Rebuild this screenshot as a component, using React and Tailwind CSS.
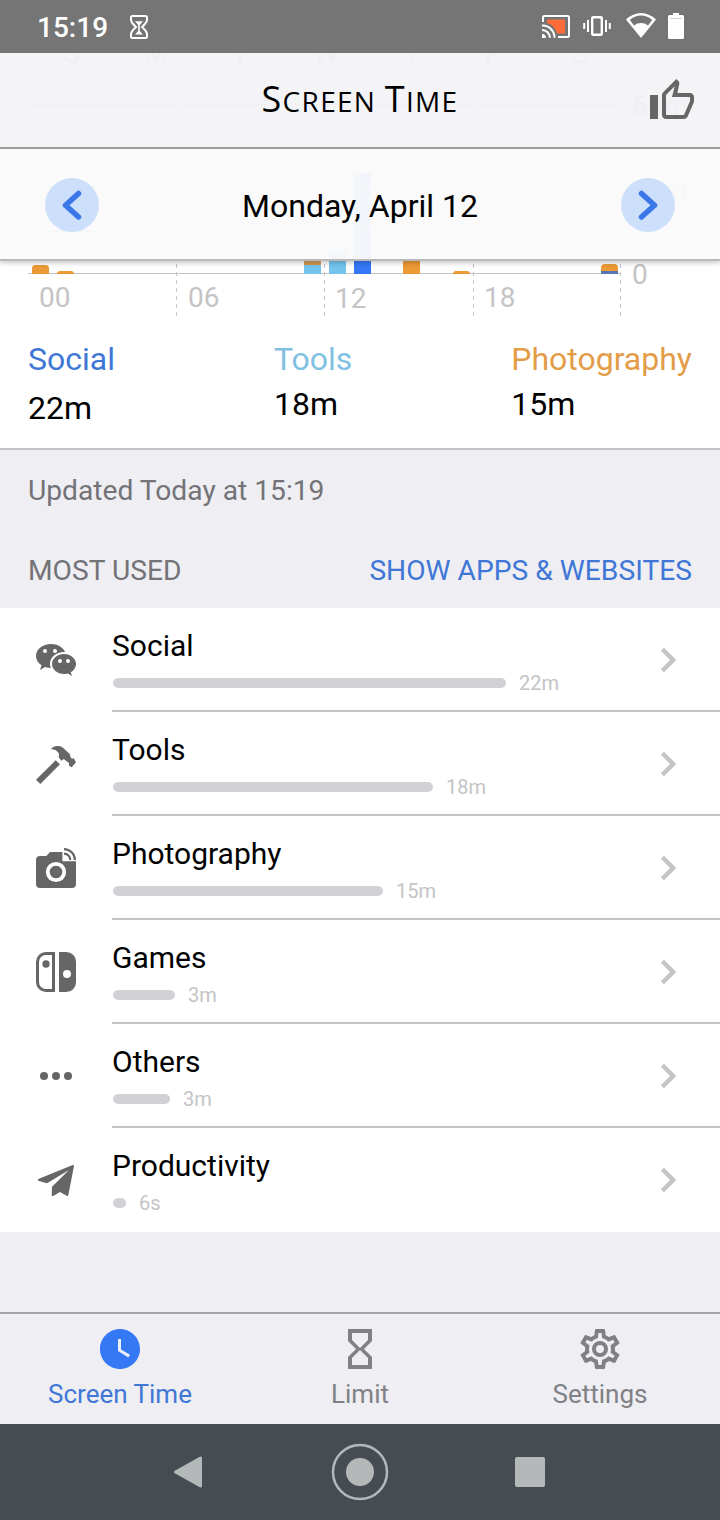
import React from 'react';

const rows = [
  { name: 'Social', time: '22m', width: 393, Icon: ChatIcon },
  { name: 'Tools', time: '18m', width: 320, Icon: HammerIcon },
  { name: 'Photography', time: '15m', width: 270, Icon: CameraIcon },
  { name: 'Games', time: '3m', width: 62, Icon: GamesIcon },
  { name: 'Others', time: '3m', width: 57, Icon: DotsIcon },
  { name: 'Productivity', time: '6s', width: 13, Icon: PlaneIcon },
];

const weekdays = [
  { x: 71, d: 'S' },
  { x: 156, d: 'M' },
  { x: 240, d: 'T' },
  { x: 326, d: 'W' },
  { x: 411, d: 'T' },
  { x: 492, d: 'F' },
  { x: 580, d: 'S' },
];

const gridLines = [176.5, 324.5, 473.5, 620.5];

function ChatIcon() {
  return (
    <svg viewBox="0 0 24 24" className="w-12 h-12" fill="currentColor">
      <path d="M9.5,4C5.36,4 2,6.69 2,10C2,11.89 3.08,13.56 4.78,14.66L4,17L6.5,15.5C7.39,15.81 8.37,16 9.41,16C9.15,15.37 9,14.7 9,14C9,10.69 12.13,8 16,8C16.19,8 16.38,8 16.56,8.03C15.54,5.69 12.78,4 9.5,4M6.5,6.5A1,1 0 0,1 7.5,7.5A1,1 0 0,1 6.5,8.5A1,1 0 0,1 5.5,7.5A1,1 0 0,1 6.5,6.5M11.5,6.5A1,1 0 0,1 12.5,7.5A1,1 0 0,1 11.5,8.5A1,1 0 0,1 10.5,7.5A1,1 0 0,1 11.5,6.5M16,9C12.69,9 10,11.24 10,14C10,16.76 12.69,19 16,19C16.67,19 17.31,18.92 17.91,18.75L20,20L19.38,18.13C20.95,17.22 22,15.71 22,14C22,11.24 19.31,9 16,9M14,11.5A1,1 0 0,1 15,12.5A1,1 0 0,1 14,13.5A1,1 0 0,1 13,12.5A1,1 0 0,1 14,11.5M18,11.5A1,1 0 0,1 19,12.5A1,1 0 0,1 18,13.5A1,1 0 0,1 17,12.5A1,1 0 0,1 18,11.5Z" />
    </svg>
  );
}

function HammerIcon() {
  return (
    <svg viewBox="0 0 144 144" className="w-12 h-12" fill="currentColor">
      <path d="M12 119L71 61L84 73L25 132Z" />
      <path d="M56 28C62 20 71 17 79 18C87 19 92 22 97 27L113 42C115 45 114 48 117 54L122 56L125 54L132 67L119 82L111 77V69L106 65C101 63 98 57 94 58L88 62L80 52L81 43C79 34 68 27 56 28Z" />
    </svg>
  );
}

function CameraIcon() {
  return (
    <svg viewBox="0 0 24 24" className="w-12 h-12">
      <path
        fill="currentColor"
        d="M9 4L7.2 6H4a2 2 0 0 0-2 2v12a2 2 0 0 0 2 2h16a2 2 0 0 0 2-2V8.6H15.200V4H9z"
      />
      <circle cx="12" cy="14" r="4.1" fill="none" stroke="#fff" strokeWidth="1.9" />
      <g fill="none" stroke="currentColor" strokeWidth="1.1">
        <path d="M16 2.550A5.450 5.450 0 0 1 21.450 8" />
        <path d="M16 4.850A3.150 3.150 0 0 1 19.150 8" />
      </g>
    </svg>
  );
}

function GamesIcon() {
  return (
    <svg viewBox="0 0 144 144" className="w-12 h-12" fill="currentColor">
      <path
        d="M64.500 16.500H42A25 25 0 0 0 16.500 42V102A25 25 0 0 0 42 127.500H64.500Z"
        fill="none"
        stroke="currentColor"
        strokeWidth="9"
      />
      <circle cx="42" cy="48" r="11" />
      <path
        fillRule="evenodd"
        d="M81 12H103A29 29 0 0 1 132 41V103A29 29 0 0 1 103 132H81ZM105 66A12 12 0 1 0 105 90A12 12 0 1 0 105 66Z"
      />
    </svg>
  );
}

function DotsIcon() {
  return (
    <svg viewBox="0 0 24 24" className="w-12 h-12" fill="currentColor">
      <circle cx="6" cy="12" r="2" />
      <circle cx="12" cy="12" r="2" />
      <circle cx="18" cy="12" r="2" />
    </svg>
  );
}

function PlaneIcon() {
  return (
    <svg viewBox="0 0 144 144" className="w-12 h-12" fill="currentColor">
      <path d="M19 69L122 27Q126 26 126 30L109 117Q108 121 104 119L84 108L65 119Q59 122 59 117L60 92L111 42L45 82L19 74Q16 71 19 69Z" />
    </svg>
  );
}

function StatusBar() {
  return (
    <div className="h-[53px] bg-[#757575] flex items-center text-white">
      <span className="ml-[37px] mt-0.5 w-[92px] text-[28px] leading-none font-medium">15:19</span>
      <svg className="w-5 h-[26px]" viewBox="0 0 20 26" fill="none" stroke="#fff">
        <path
          d="M3.500 2H16.500Q18 2 18 3.500V6Q17.500 9 13 13Q17.500 17 18 20V22.500Q18 24 16.500 24H3.500Q2 24 2 22.500V20Q2.500 17 7 13Q2.500 9 2 6V3.500Q2 2 3.500 2Z"
          strokeWidth="2"
        />
        <path d="M6 7.300H14L10.800 11V17L14 20.500H6L9.200 17V11Z" fill="#fff" stroke="none" />
      </svg>
      <div className="ml-auto mr-9 flex items-center">
        <svg className="w-7 h-[23px]" viewBox="0 0 28 23" fill="none" stroke="#fff" strokeWidth="2">
          <path d="M5 4.500H23V18.500H15C13.500 13 10 9.500 5 8Z" fill="#ff6b39" stroke="none" />
          <path d="M1 7V2.500Q1 1 2.500 1H25.500Q27 1 27 2.500V20.500Q27 22 25.500 22H16" />
          <path d="M0 10.500A12 12 0 0 1 12.500 22.800M0 15A7.800 7.800 0 0 1 8 22.800" />
          <path d="M0 19A4 4 0 0 1 4 23H0Z" fill="#fff" stroke="none" />
        </svg>
        <svg className="ml-[13px] mb-0.5 w-7 h-5" viewBox="0 0 28 20" fill="none" stroke="#fff">
          <rect x="9.200" y="1.200" width="9.600" height="17.600" rx="1" strokeWidth="2.400" />
          <path d="M1.200 7V13M5 4V16M23 4V16M26.800 7V13" strokeWidth="2" />
        </svg>
        <svg className="ml-[15px] mb-0.5 w-[30px] h-[25px]" viewBox="0 0 30 25">
          <path
            fill="#fff"
            fillRule="evenodd"
            d="M15 0Q23 0 30 6.500L15 25L0 6.500Q7 0 15 0ZM15 2.500Q8.500 2.500 3.800 7L8 12.400Q11 10 15 10T22 12.400L26.200 7Q21.500 2.500 15 2.500Z"
          />
        </svg>
        <svg className="ml-3 mb-0.5 w-4 h-[26px]" viewBox="0 0 16 26" fill="#fff">
          <path d="M5 0H11V2H14.500Q16 2 16 3.500V24.500Q16 26 14.500 26H1.500Q0 26 0 24.500V3.500Q0 2 1.500 2H5Z" />
          <path d="M2 5.500H14" stroke="#c4c4c4" strokeWidth=".8" />
        </svg>
      </div>
    </div>
  );
}

function Header() {
  return (
    <div className="relative h-24 bg-[#f4f4f7] border-b-2 border-[#a1a1a5] overflow-hidden">
      {/* chart scrolled behind the translucent header */}
      <svg className="absolute inset-0 w-full h-full" viewBox="0 0 720 94">
        <g fill="#f0f0f3" fontSize="28" textAnchor="middle">
          {weekdays.map((w) => (
            <text key={w.x} x={w.x} y="10">{w.d}</text>
          ))}
          <text x="660" y="62">60m</text>
        </g>
        <path d="M28 51.500H621" stroke="#f0f0f3" />
        <path d="M176.500 54V94M324.500 54V94M473.500 54V94M620.500 54V94" stroke="#f1f1f4" strokeDasharray="4 4" />
      </svg>
      <div className="relative h-full flex items-center justify-center">
        <h1 className="mb-0.5 font-['Open_Sans'] font-normal text-[28px] leading-none tracking-[1.3px] whitespace-nowrap">
          <span className="text-[36px]">S</span>CREEN <span className="text-[36px]">T</span>IME
        </h1>
        <svg viewBox="0 0 24 24" className="absolute right-6 top-6 w-12 h-12" fill="#666">
          <path d="M9 21h9c.83 0 1.54-.5 1.84-1.22l3.02-7.05c.09-.23.14-.47.14-.73v-2c0-1.1-.9-2-2-2h-6.31l.95-4.57.03-.32c0-.41-.17-.79-.44-1.06L14.17 1 7.580 7.590C7.220 7.950 7 8.450 7 9v10c0 1.100.9 2 2 2zM9 9l4.340-4.340L12 10h9v2l-3 7H9V9zM1 9h4v12H1z" />
        </svg>
      </div>
    </div>
  );
}

function DateBar() {
  return (
    <div className="relative z-10 h-28 bg-[#fafafa] border-b-2 border-[#b9b9b9] shadow-[0_2px_5px_rgba(0,0,0,0.22)]">
      <svg className="absolute inset-0 w-full h-full" viewBox="0 0 720 110">
        <path d="M354 24H371V110H354Z" fill="#f2f6fa" />
        <path d="M329 101H346V110H329Z" fill="#f4f8fa" />
        <path d="M28 38.500H621M28 82.500H621" stroke="#f7f7f7" />
        <text x="675" y="50" fontSize="28" textAnchor="middle" fill="#f7f7f7">m</text>
      </svg>
      <div className="relative h-full flex items-center justify-between px-[45px] pt-0.5">
        <button className="w-[54px] h-[54px] rounded-full bg-[#cce0fb]">
          <svg viewBox="0 0 54 54" fill="none" stroke="#3a77e8" strokeWidth="5.500" strokeLinecap="round" strokeLinejoin="round">
            <path d="M33.500 15.500L20.500 27.300L33.500 39" />
          </svg>
        </button>
        <span className="mt-0.5 text-[32px] leading-none whitespace-nowrap">Monday, April 12</span>
        <button className="w-[54px] h-[54px] rounded-full bg-[#cce0fb]">
          <svg viewBox="0 0 54 54" fill="none" stroke="#3a77e8" strokeWidth="5.500" strokeLinecap="round" strokeLinejoin="round">
            <path d="M20.500 15.500L33.500 27.300L20.500 39" />
          </svg>
        </button>
      </div>
    </div>
  );
}

function HourChart() {
  return (
    <svg className="block w-full h-[70px]" viewBox="0 261 720 70">
      <path d="M28 273.500H621" stroke="#c4c4c6" />
      {gridLines.map((x) => (
        <path key={x} d={`M${x} 264V316`} stroke="#c4c4c6" strokeDasharray="4 4" />
      ))}
      <g fill="#ec9a35">
        <path d="M32 274V268.500Q32 265 35.500 265H45.500Q49 265 49 268.500V274Z" />
        <path d="M57 274Q57 271 60 271H71Q74 271 74 274Z" />
        <path d="M304 255H321V265H304Z" fill="#d39a55" />
        <path d="M403 255H420V274H403Z" />
        <path d="M453 274Q453 271 456 271H467Q470 271 470 274Z" />
        <path d="M601 271V268Q601 264 605 264H614Q618 264 618 268V271Z" />
      </g>
      <path d="M304 265H321V274H304ZM329 255H346V274H329Z" fill="#75c4ee" />
      <path d="M354 255H371V274H354Z" fill="#3478f6" />
      <path d="M601 271H618V274H601Z" fill="#5875b5" />
      <g fill="#c4c4c6" fontSize="28">
        <text x="39" y="307">00</text>
        <text x="188" y="307">06</text>
        <text x="335" y="308">12</text>
        <text x="484" y="307">18</text>
        <text x="632" y="284">0</text>
      </g>
    </svg>
  );
}

function TabBar() {
  return (
    <div className="h-28 bg-[#eeeef3] border-t-2 border-[#a3a3a8] grid grid-cols-3 text-[26px] leading-none text-[#808185]">
      <div className="flex flex-col items-center pt-[11px] text-[#4077d6]">
        <svg viewBox="0 0 24 24" className="w-12 h-12" fill="#3478f6">
          <path d="M12 2C6.500 2 2 6.500 2 12s4.500 10 10 10 10-4.500 10-10S17.500 2 12 2zm4.200 14.200L11 13V7h1.500v5.200l4.500 2.700-.8 1.300z" />
        </svg>
        <span className="mt-2">Screen Time</span>
      </div>
      <div className="flex flex-col items-center pt-[11px]">
        <svg viewBox="0 0 24 24" className="w-12 h-12" fill="currentColor">
          <path d="M6 2v6h.01L6 8.010 10 12l-4 4 .01.01H6V22h12v-5.990h-.01L18 16l-4-4 4-3.990-.01-.01H18V2H6zm10 14.500V20H8v-3.500l4-4 4 4zm-4-5l-4-4V4h8v3.500l-4 4z" />
        </svg>
        <span className="mt-2">Limit</span>
      </div>
      <div className="flex flex-col items-center pt-[11px]">
        <svg viewBox="0 0 24 24" className="w-12 h-12" fill="currentColor">
          <path d="M12,8A4,4 0 0,1 16,12A4,4 0 0,1 12,16A4,4 0 0,1 8,12A4,4 0 0,1 12,8M12,10A2,2 0 0,0 10,12A2,2 0 0,0 12,14A2,2 0 0,0 14,12A2,2 0 0,0 12,10M10,22C9.75,22 9.54,21.82 9.5,21.58L9.13,18.93C8.5,18.68 7.96,18.34 7.44,17.94L4.95,18.95C4.73,19.03 4.46,18.95 4.34,18.73L2.34,15.27C2.21,15.05 2.27,14.78 2.46,14.63L4.57,12.97L4.5,12L4.57,11L2.46,9.37C2.27,9.22 2.21,8.95 2.34,8.73L4.34,5.27C4.46,5.05 4.73,4.96 4.95,5.05L7.44,6.05C7.96,5.66 8.5,5.32 9.13,5.07L9.5,2.42C9.54,2.18 9.75,2 10,2H14C14.25,2 14.46,2.18 14.5,2.42L14.87,5.07C15.5,5.32 16.04,5.66 16.56,6.05L19.05,5.05C19.27,4.96 19.54,5.05 19.66,5.27L21.66,8.73C21.79,8.95 21.73,9.22 21.54,9.37L19.43,11L19.5,12L19.43,13L21.54,14.63C21.73,14.78 21.79,15.05 21.66,15.27L19.66,18.73C19.54,18.95 19.27,19.04 19.05,18.95L16.56,17.95C16.04,18.34 15.5,18.68 14.87,18.93L14.5,21.58C14.46,21.82 14.25,22 14,22H10M11.25,4L10.88,6.61C9.68,6.86 8.62,7.5 7.85,8.39L5.44,7.35L4.69,8.65L6.8,10.2C6.4,11.37 6.4,12.64 6.8,13.8L4.68,15.36L5.43,16.66L7.86,15.62C8.63,16.5 9.68,17.14 10.87,17.38L11.24,20H12.76L13.13,17.39C14.32,17.14 15.37,16.5 16.14,15.62L18.57,16.66L19.32,15.36L17.2,13.81C17.6,12.64 17.6,11.37 17.2,10.2L19.31,8.65L18.56,7.35L16.15,8.39C15.38,7.5 14.32,6.86 13.12,6.62L12.75,4H11.25Z" />
        </svg>
        <span className="mt-2">Settings</span>
      </div>
    </div>
  );
}

export default function App() {
  return (
    <div className="w-[720px] h-[1520px] overflow-hidden bg-[#eeeef3] flex flex-col font-['Roboto',sans-serif] text-black">
      <StatusBar />
      <Header />
      <DateBar />

      <section className="h-[189px] bg-white border-b-2 border-[#c4c4c6]">
        <HourChart />
        <div className="flex justify-between px-7 pt-3 text-[32px] leading-8">
          <div>
            <p className="text-[#4077d6]">Social</p>
            <p className="mt-[17px]">22m</p>
          </div>
          <div>
            <p className="text-[#80c0e2]">Tools</p>
            <p className="mt-[13px]">18m</p>
          </div>
          <div>
            <p className="text-[#e39c47]">Photography</p>
            <p className="mt-[13px]">15m</p>
          </div>
        </div>
      </section>

      <div className="h-[158px] px-7 pt-[25px] text-[28.2px] leading-8 text-[#737377]">
        <p>Updated Today at 15:19</p>
        <div className="mt-12 flex justify-between">
          <span>MOST USED</span>
          <span className="text-[#4077d6]">SHOW APPS &amp; WEBSITES</span>
        </div>
      </div>

      <div className="h-[624px] bg-white">
        {rows.map(({ name, time, width, Icon }, i) => (
          <div key={name} className="h-[104px] flex pl-8">
            <div className="w-20 pt-7 text-[#666]">
              <Icon />
            </div>
            <div className={`flex-1 flex justify-between ${i < rows.length - 1 ? 'border-b-2 border-[#c4c4c6]' : ''}`}>
              <div className="pt-[22px]">
                <p className="text-[30px] leading-8">{name}</p>
                <div className="mt-[11px] ml-px flex items-center h-5">
                  <div className="h-2.5 rounded-full bg-[#d1d1d6]" style={{ width }} />
                  <span className="ml-[13px] text-[20px] leading-5 text-[#c4c4c6]">{time}</span>
                </div>
              </div>
              <svg viewBox="0 0 24 24" className="mt-7 mr-7 w-12 h-12" fill="#c4c4c4" stroke="#c4c4c4" strokeWidth=".3">
                <path d="M8.590 16.580L13.170 12L8.590 7.410L10 6L16 12L10 18L8.590 16.580Z" />
              </svg>
            </div>
          </div>
        ))}
      </div>

      <div className="h-20" />
      <TabBar />

      <div className="h-24 bg-[#454d52]">
        <svg viewBox="0 0 720 96" className="w-full h-full" fill="#b4b8b9">
          <path d="M175.500 48L200.500 34V62Z" stroke="#b4b8b9" strokeWidth="3" strokeLinejoin="round" />
          <circle cx="360" cy="48" r="27" fill="none" stroke="#b4b8b9" strokeWidth="2.500" />
          <circle cx="360" cy="48" r="14" />
          <rect x="515" y="33" width="30" height="30" rx="2" />
        </svg>
      </div>
    </div>
  );
}
